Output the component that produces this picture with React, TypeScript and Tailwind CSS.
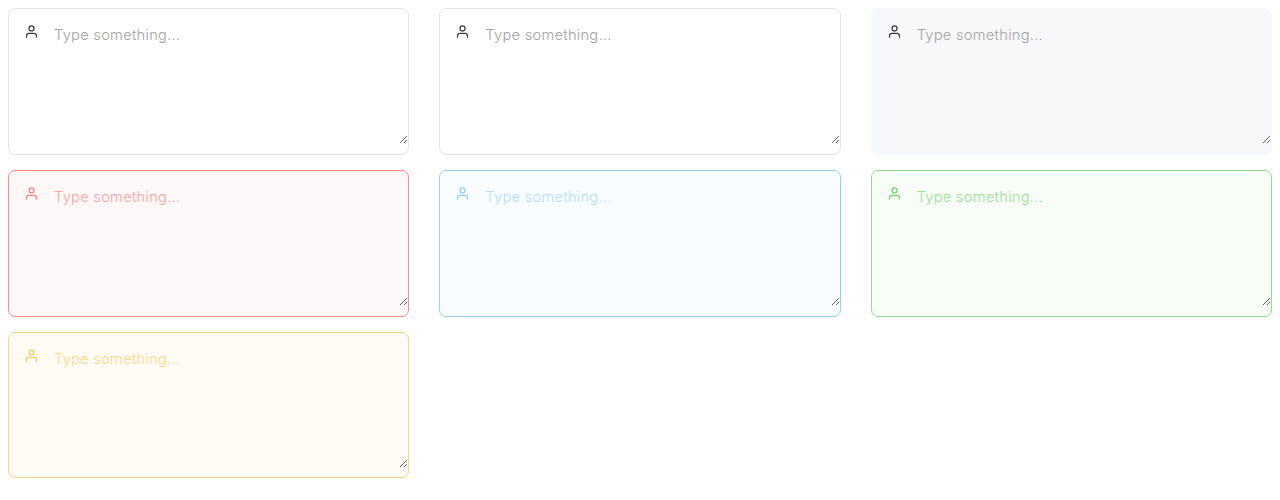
const variants = [
  { box: "border-[#e4e4e4] bg-white", icon: "text-[#3b3b40]", field: "placeholder:text-[#a2a2a2]" },
  { box: "border-[#e4e4e4] bg-white", icon: "text-[#3b3b40]", field: "placeholder:text-[#a2a2a2]" },
  { box: "border-[#f6f8fa] bg-[#f6f8fa]", icon: "text-[#3b3b40]", field: "placeholder:text-[#a2a4a6]" },
  { box: "border-[#ff8a8a] bg-[#fff8f8]", icon: "text-[#f98080]", field: "placeholder:text-[#fea0a0]" },
  { box: "border-[#90d0fb] bg-[#f9fdff]", icon: "text-[#90d0fb]", field: "placeholder:text-[#b0defd]" },
  { box: "border-[#93de8d] bg-[#f8fdf8]", icon: "text-[#71d36a]", field: "placeholder:text-[#98e193]" },
  { box: "border-[#fdd37b] bg-[#fffcf5]", icon: "text-[#fbc65c]", field: "placeholder:text-[#fdd686]" },
];

function UserIcon({ className }: { className: string }) {
  return (
    <svg className={`size-[15px] shrink-0 ${className}`} viewBox="0 0 24 24" fill="none" stroke="currentColor" strokeWidth="2" strokeLinecap="round" strokeLinejoin="round">
      <path d="M20 21v-2a4 4 0 0 0-4-4H8a4 4 0 0 0-4 4v2" />
      <circle cx="12" cy="7" r="4" />
    </svg>
  );
}

export default function App() {
  return (
    <main className="grid grid-cols-3 gap-x-[30px] gap-y-[15px] p-2 font-['Inter',sans-serif]">
      {variants.map((v, i) => (
        <div key={i} className={`flex h-[146.8px] items-start rounded-[7px] border pt-[15px] pl-[15px] pb-[10px] ${v.box}`}>
          <UserIcon className={v.icon} />
          <textarea
            placeholder="Type something..."
            className={`ml-[15px] block h-[120px] min-w-0 flex-1 resize bg-transparent text-[14.7px] leading-[22.5px] font-light tracking-[0.25px] outline-none ${v.field}`}
          />
        </div>
      ))}
    </main>
  );
}
